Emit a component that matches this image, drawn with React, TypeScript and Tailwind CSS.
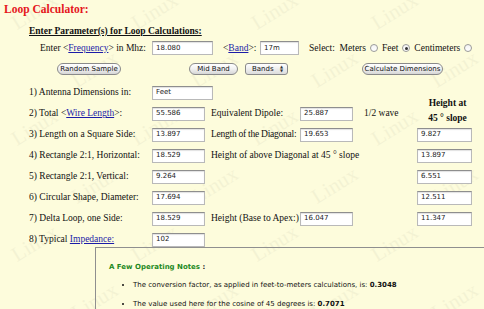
import React from 'react';

const serif = "font-['Liberation_Serif','Times_New_Roman',serif]";
const sans = "font-['DejaVu_Sans','Liberation_Sans',sans-serif]";

const Field = ({ value, w = 'w-[53px]' }: { value: string; w?: string }) => (
  <div
    className={`${w} h-[14px] shrink-0 bg-white border border-[#b9b9b9] border-t-[#8e8e8e] shadow-[inset_0_1px_1px_rgba(0,0,0,0.12)] pl-[3px] flex items-center text-[7px] text-[#222] ${sans}`}
  >
    {value}
  </div>
);

const Pill = ({ label, w }: { label: string; w: string }) => (
  <div
    className={`${w} h-[12px] rounded-full border border-[#8a8a8a] bg-gradient-to-b from-white via-[#f1f1f1] to-[#d6d6d6] flex items-center justify-center text-[7px] text-[#111] ${sans}`}
  >
    {label}
  </div>
);

const Radio = ({ on }: { on?: boolean }) => (
  <span className="inline-flex w-[8px] h-[8px] rounded-full border border-[#9a9a9a] bg-gradient-to-b from-[#f4f4f4] to-white items-center justify-center mx-[4px]">
    {on && <span className="w-[3px] h-[3px] rounded-full bg-[#333]" />}
  </span>
);

const Link = ({ children }: { children: React.ReactNode }) => (
  <span className="text-[#1c1ca8] underline">{children}</span>
);

// faint tiled "Linux" background marks
const Watermarks = () => {
  const marks: { x: number; y: number }[] = [];
  [0, 1, 2, 3, 4, 5].forEach((r) => {
    [0, 1, 2, 3, 4].forEach((c) => {
      marks.push({ x: c * 120 + (r % 2 ? 70 : 10), y: r * 58 - 4 });
    });
  });
  return (
    <div aria-hidden className="absolute inset-0 pointer-events-none">
      {marks.map((m, i) => (
        <span
          key={i}
          className={`absolute text-[21px] text-[#000] opacity-[0.035] -rotate-[32deg] ${serif}`}
          style={{ left: m.x, top: m.y }}
        >
          Linux
        </span>
      ))}
    </div>
  );
};

const App: React.FC = () => {
  const rows: React.ReactNode[] = [
    <>
      <div className="pl-[29px]">1) Antenna Dimensions in:</div>
      <Field value="Feet" w="w-[61px]" />
      <div />
      <div />
      <div />
    </>,
    <>
      <div className="pl-[29px]">
        2) Total &lt;<Link>Wire Length</Link>&gt;:
      </div>
      <Field value="55.586" />
      <div>Equivalent Dipole:</div>
      <div className="flex items-center">
        <Field value="25.887" />
        <span className="ml-[11px]">1/2 wave</span>
      </div>
      <div className="text-center font-bold leading-[15px] pl-[6px] -mt-[6px] whitespace-nowrap">
        Height at
        <br />
        45 ° slope
      </div>
    </>,
    <>
      <div className="pl-[29px]">3) Length on a Square Side:</div>
      <Field value="13.897" />
      <div className="whitespace-nowrap tracking-[-0.25px]">Length of the Diagonal:</div>
      <div>
        <Field value="19.653" />
      </div>
      <Field value="9.827" w="w-[55px]" />
    </>,
    <>
      <div className="pl-[29px]">4) Rectangle 2:1, Horizontal:</div>
      <Field value="18.529" />
      <div className="col-span-2">Height of above Diagonal at 45 ° slope</div>
      <Field value="13.897" w="w-[55px]" />
    </>,
    <>
      <div className="pl-[29px]">5) Rectangle 2:1, Vertical:</div>
      <Field value="9.264" />
      <div />
      <div />
      <Field value="6.551" w="w-[55px]" />
    </>,
    <>
      <div className="pl-[29px]">6) Circular Shape, Diameter:</div>
      <Field value="17.694" />
      <div />
      <div />
      <Field value="12.511" w="w-[55px]" />
    </>,
    <>
      <div className="pl-[29px]">7) Delta Loop, one Side:</div>
      <Field value="18.529" />
      <div className="whitespace-nowrap">Height (Base to Apex:)</div>
      <div>
        <Field value="16.047" />
      </div>
      <Field value="11.347" w="w-[55px]" />
    </>,
    <>
      <div className="pl-[29px]">
        8) Typical <Link>Impedance:</Link>
      </div>
      <Field value="102" />
      <div />
      <div />
      <div />
    </>,
  ];

  return (
    <div className={`relative w-[484px] h-[309px] overflow-hidden bg-[#fdfcdc] text-[#111] ${serif}`}>
      <Watermarks />

      <div className="relative">
        <h1 className="pl-[4px] pt-[1px] h-[16px] text-[11.5px] font-bold text-[#e5161c] leading-[16px]">
          Loop Calculator:
        </h1>

        <div className="pl-[29px] mt-[9px] text-[9.5px] font-bold underline leading-[12px]">
          Enter Parameter(s) for Loop Calculations:
        </div>

        <div className="flex items-center h-[14px] mt-[4px] text-[9.5px]">
          <span className="pl-[40px] w-[152px]">
            Enter &lt;<Link>Frequency</Link>&gt; in Mhz:
          </span>
          <Field value="18.080" w="w-[61px]" />
          <span className="ml-[10px] w-[37px]">
            &lt;<Link>Band</Link>&gt;:
          </span>
          <Field value="17m" w="w-[39px]" />
          <span className="ml-[10px] flex items-center">
            Select:&nbsp;&nbsp;Meters
            <Radio />
            Feet
            <Radio on />
            Centimeters
            <Radio />
          </span>
        </div>

        <div className="flex items-center h-[12px] mt-[8px]">
          <div className="ml-[57px]">
            <Pill label="Random Sample" w="w-[64px]" />
          </div>
          <div className="ml-[68px]">
            <Pill label="Mid Band" w="w-[49px]" />
          </div>
          <div
            className={`ml-[7px] w-[43px] h-[12px] rounded-[3px] border border-[#8a8a8a] bg-gradient-to-b from-white to-[#dcdcdc] flex items-center justify-between pl-[6px] pr-[4px] text-[7px] ${sans}`}
          >
            <span>Bands</span>
            <span className="flex flex-col leading-none text-[4px] text-[#333]">
              <span>▲</span>
              <span>▼</span>
            </span>
          </div>
          <div className="ml-[74px]">
            <Pill label="Calculate Dimensions" w="w-[81px]" />
          </div>
        </div>

        <div className="grid grid-cols-[152px_59px_89px_117px_55px] auto-rows-[21px] items-center mt-[7px] text-[9.5px]">
          {rows.map((r, i) => (
            <React.Fragment key={i}>{r}</React.Fragment>
          ))}
        </div>

        <div className={`ml-[95px] -mt-[3px] border-t border-l border-[#8f8f8f] pt-[14px] pl-[13px] h-[70px] ${sans}`}>
          <div className="text-[7px] font-bold leading-[10px]">
            <span className="text-[#1f8a1f]">A Few Operating Notes</span> :
          </div>
          <ul className="mt-[8px] pl-[24px] list-disc text-[7px] leading-[10px] space-y-[9px]">
            <li>
              The conversion factor, as applied in feet-to-meters calculations, is: <b>0.3048</b>
            </li>
            <li>
              The value used here for the cosine of 45 degrees is: <b>0.7071</b>
            </li>
          </ul>
        </div>
      </div>
    </div>
  );
};

export default App;
